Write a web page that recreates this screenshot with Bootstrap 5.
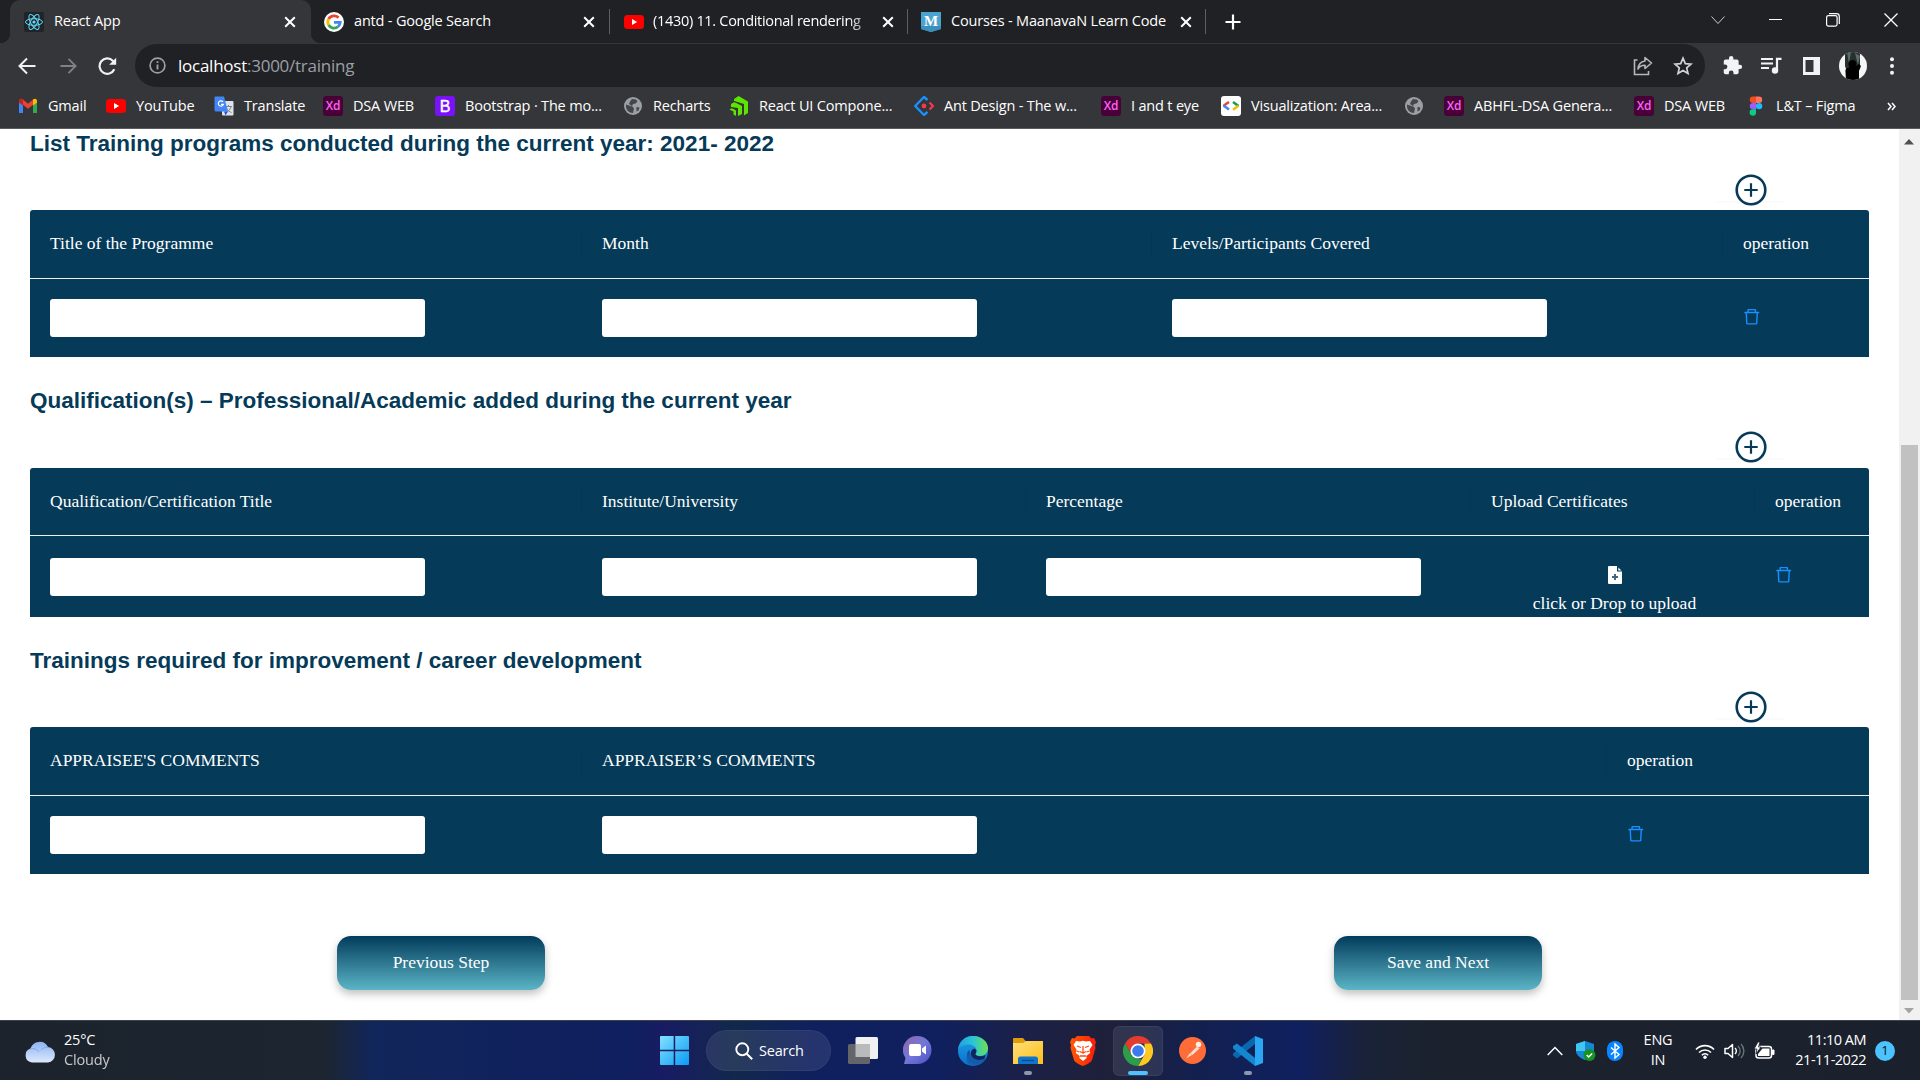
<!DOCTYPE html>
<html lang="en">
<head>
<meta charset="utf-8">
<title>React App</title>
<link href="https://cdn.jsdelivr.net/npm/bootstrap@5.3.0/dist/css/bootstrap.min.css" rel="stylesheet">
<style>
body{width:1920px;height:1080px;overflow:hidden;background:#fff;font-family:"Open Sans","Noto Sans",sans-serif}
svg{display:block;flex:none}
.ui{font-size:14.5px;letter-spacing:-.18px;color:#fff;white-space:nowrap;line-height:20px}
/* browser chrome */
.tabstrip{height:43px;background:#202124;padding-left:10px}
.tab{height:43px;padding:0 15px 0 14px}
.tab-on{width:301px;background:#35363a;border-radius:10px 10px 0 0;position:relative}
.tab-on::before,.tab-on::after{content:"";position:absolute;bottom:0;width:10px;height:10px}
.tab-on::before{left:-10px;background:radial-gradient(circle at 0 0,#202124 10px,#35363a 10.5px)}
.tab-on::after{right:-10px;background:radial-gradient(circle at 100% 0,#202124 10px,#35363a 10.5px)}
.tab-b{width:297px;padding-left:13px}
.tab-b:nth-child(2){width:298px;padding-right:14px}
.tab-b:nth-child(6){padding-right:13px}
.tab-c{width:297px;padding-right:13px}
.tabsep{width:1px;height:25px;background:#5d5f63}
.tab .ui{margin-left:10px;flex:1;padding-bottom:2px}
.tab-c .ui{margin-left:9px;letter-spacing:-.3px}
.fade-end{-webkit-mask-image:linear-gradient(90deg,#000 88%,rgba(0,0,0,.25))}
.plus-tab{margin-left:19px}
.winbtns{margin-left:auto;padding-right:22px;gap:44px}
.toolbar{height:45px;background:#35363a;padding-left:18px;padding-right:17px}
.omni{width:1570px;height:43px;border-radius:22px;background:#202124;margin-left:18px;padding:0 12px 0 14px}
.url{font-size:17px;letter-spacing:-.25px;color:#9aa0a6;line-height:24px;margin-left:12px}
.url b{font-weight:400;color:#fff}
.ic-reload{margin-left:21px}
.ic-star{margin-left:20px}
.ic-puzzle{margin-left:17px}
.ic-queue{margin-left:18px}
.ic-panel{margin-left:20px}
.ic-avatar{margin-left:18px}
.ic-menu{margin-left:22px}
.marks{height:41px;background:#35363a;border-bottom:1px solid #5a5b5f;padding:0 0 4px 18px}
.bm{width:88px;gap:10px}
.bm svg{width:20px;height:20px}
.bm:nth-child(2){width:108px}.bm:nth-child(3){width:109px}.bm:nth-child(4){width:112px}.bm:nth-child(5){width:188px}
.bm:nth-child(6){width:106px}.bm:nth-child(7){width:185px}.bm:nth-child(8){width:187px}.bm:nth-child(9){width:120px}
.bm:nth-child(10){width:183px}.bm:nth-child(11){width:40px}.bm:nth-child(12){width:190px}.bm:nth-child(13){width:112px}.bm:nth-child(14){width:141px}
.bm span{padding-bottom:1px}
/* page */
.view{height:891px;overflow:hidden}
.page-main{padding-left:30px;width:1899px}
.sec-head{font:700 22.5px/28px "Liberation Sans",Arial,sans-serif;color:#053a58;margin:0;height:28px;padding-top:1px}
.sec + .sec{margin-top:29px}
.sec:first-child .sec-head{height:27px;line-height:27px}
.add-row{height:54px;padding:5px 115px 0 0}
.sec + .sec .add-row{height:53px;padding-top:4px}
.sec:nth-child(2) .add-row{height:54px}
.add-btn{width:69px;height:40px;border:0;background:transparent;box-shadow:0 2px 0 rgba(0,0,0,.016);padding:13px 0 0 19.5px}
.grid-t{--bs-table-bg:#053a58;--bs-table-color:#fff;table-layout:fixed;width:1839px;color:#fff;font:17.5px/27px "Liberation Serif","Times New Roman",serif;border-radius:3px 3px 0 0;overflow:hidden;border-collapse:separate;border-spacing:0}
.grid-t th{font-weight:400;height:69px;padding:0 20px 2px;border-bottom:1px solid #f0f0f0;position:relative;vertical-align:middle}
.grid-t th:not(:last-child)::after{content:"";position:absolute;right:0;top:20px;width:1px;height:28px;background:rgba(0,0,0,.05)}
.grid-t td{height:78px;padding:0 20px;border:0;vertical-align:middle}
.t-qual th{height:68px;padding-bottom:0}
.t-qual td{height:81px}
.t-qual .field{height:37px}
.grid-t .field{width:375px;height:38px;border:0;border-radius:3px;background:#fff;padding:0 14px;display:block;box-shadow:none}
.drop{padding:30px 0 0 3px;height:81px;line-height:24px}
.drop svg{margin-bottom:7px}
.trash{margin-top:-3px}
.steps{padding:62px 0 0 307px;gap:789px}
.step-btn{width:208px;height:54px;border:0;border-radius:14px;background:linear-gradient(#023b5b,#5bb5c6);color:#fff;font:17.5px/27px "Liberation Serif","Times New Roman",serif;box-shadow:0 4px 9px rgba(0,0,0,.25);padding:0 0 2px}
.scroll{width:21px;background:#f1f1f1;padding:9px 4px 0 2px}
.thumb{width:17px;height:555px;background:#c1c1c1;margin-top:300px}
/* taskbar */
.task{height:60px;border-top:1px solid #3b434d;background:linear-gradient(90deg,#1c232d 0,#1c2530 325px,#11265a 372px,#10225c 500px,#101f60 630px,#181c62 665px,#12284c 735px,#10205f 810px,#10205f 940px,#1b2045 1030px,#1f203a 1110px,#122050 1200px,#10205f 1300px,#1a2238 1365px,#1b222e 1430px,#1b212c 100%)}
.weather{padding-left:24px;width:660px;gap:9px}
.weather .ui{line-height:19.5px;padding-bottom:2px}
.search{width:125px;height:41px;border-radius:21px;background:rgba(255,255,255,.09);border:1px solid rgba(255,255,255,.05);margin-left:17px;margin-right:17px;gap:6px;padding-left:28px}
.app{width:55px;height:50px;position:relative}
.app-view{width:30px}
.app-chat{width:51px;margin-left:14px;margin-right:2px}
.app-on{width:50px;margin:0 2px 0 3px;border-radius:6px;background:rgba(255,255,255,.09);border:1px solid rgba(255,255,255,.06)}
.app i{position:absolute;bottom:1px;width:8px;height:4px;border-radius:2px;background:#9095ae}
.app-on i{width:20px;background:#4cc2ff;bottom:0}
.tray{margin-left:auto;padding-right:25px}
.tray .ui{padding-bottom:1px}
.ic-shield{margin-left:13px}
.ic-bt{margin-left:11px}
.ic-tray{margin-left:9px}
.lang{width:40px;margin:0 17px 0 15px;line-height:20px;text-align:center}
.tray .clock{width:91px;text-align:right;line-height:20px;letter-spacing:-.5px}
.note-dot{width:20px;height:20px;border-radius:50%;background:#4cc2ff;color:#111;font-size:13px;margin-left:9px}
</style>
<script src="https://cdn.jsdelivr.net/npm/bootstrap@5.3.0/dist/js/bootstrap.bundle.min.js"></script>
</head>
<body>
<svg width="0" height="0" class="position-absolute">
  <defs>
    <symbol id="x" viewBox="0 0 12 12"><path d="M1.200 1.200l9.600 9.600M10.800 1.200L1.200 10.800" stroke="#fff" stroke-width="2" fill="none"/></symbol>
    <symbol id="yt" viewBox="0 0 20 20"><rect y="3" width="20" height="14" rx="3.500" fill="#f00"/><path d="M8 7l5.200 3L8 13z" fill="#fff"/></symbol>
    <symbol id="globe" viewBox="0 0 20 20"><circle cx="10" cy="10" r="9" fill="#9aa0a6"/><path d="M3 8.500l4.500 1.500 2 .5 1.500 2-1 4.500c-4 0-7-3-7-7zM9 3l4 .5 1.500 2-2 2-2.500.5-1 2-3-2 1-2.500zM13.500 11l3 .500-1 3-2 1z" fill="#45464b"/></symbol>
    <symbol id="xd" viewBox="0 0 20 20"><rect width="20" height="20" rx="3.500" fill="#470137"/><text x="10" y="14.200" text-anchor="middle" font-family="Open Sans" font-weight="600" font-size="12" fill="#ff61f6" textLength="14.500" lengthAdjust="spacingAndGlyphs">Xd</text></symbol>
    <symbol id="bin" viewBox="64 64 896 896"><path fill="#1890ff" d="M360 184h-8c4.400 0 8-3.600 8-8v8h304v-8c0 4.400 3.600 8 8 8h-8v72h72v-80c0-35.300-28.700-64-64-64H352c-35.300 0-64 28.700-64 64v80h72v-72zm504 72H160c-17.700 0-32 14.300-32 32v32c0 4.400 3.600 8 8 8h60.400l24.700 523c1.600 34.100 29.800 61 63.900 61h454c34.200 0 62.300-26.800 63.900-61l24.700-523H888c4.400 0 8-3.600 8-8v-32c0-17.700-14.300-32-32-32zM731.300 840H292.700l-24.200-512h487l-24.200 512z"/></symbol>
    <symbol id="add" viewBox="0 0 32 32"><circle cx="16" cy="16" r="14.300" fill="#fff" stroke="#053a58" stroke-width="2.600"/><path d="M16 9.300v13.400M9.300 16h13.400" stroke="#053a58" stroke-width="2.200"/></symbol>
    <linearGradient id="cloudg" x1="0" y1="0" x2="0" y2="1"><stop offset="0" stop-color="#8db4f3"/><stop offset="1" stop-color="#dce8fb"/></linearGradient>
    <linearGradient id="wing" x1="0" y1="0" x2="1" y2="1"><stop offset="0" stop-color="#82e1ff"/><stop offset="1" stop-color="#0a9bf5"/></linearGradient>
    <linearGradient id="chatg" x1="0" y1="0" x2="1" y2="1"><stop offset="0" stop-color="#8f66a8"/><stop offset=".5" stop-color="#7377d8"/><stop offset="1" stop-color="#4a4fc4"/></linearGradient>
    <linearGradient id="edgeg" x1="0" y1="0" x2="1" y2="0"><stop offset="0" stop-color="#1e9fe0"/><stop offset=".5" stop-color="#2cc4d8"/><stop offset="1" stop-color="#6be34f"/></linearGradient>
    <linearGradient id="edgeb" x1="0" y1="0" x2="0" y2="1"><stop offset="0" stop-color="#1ea2e6"/><stop offset="1" stop-color="#0a6fd0"/></linearGradient>
    <linearGradient id="fold" x1="0" y1="0" x2="1" y2="1"><stop offset="0" stop-color="#ffe07a"/><stop offset="1" stop-color="#fdbd1b"/></linearGradient>
    <linearGradient id="brv" x1="0" y1="0" x2="1" y2="0"><stop offset="0" stop-color="#ff5a00"/><stop offset="1" stop-color="#fa1c0a"/></linearGradient>
  </defs>
</svg>

<header>
  <div class="tabstrip d-flex align-items-center">
    <div class="tab tab-on d-flex align-items-center">
      <svg width="20" height="20" viewBox="0 0 20 20"><rect width="20" height="20" rx="2" fill="#202327"/><g fill="none" stroke="#61dafb" stroke-width="1"><ellipse cx="10" cy="10" rx="8.500" ry="3.300"/><ellipse cx="10" cy="10" rx="8.500" ry="3.300" transform="rotate(60 10 10)"/><ellipse cx="10" cy="10" rx="8.500" ry="3.300" transform="rotate(120 10 10)"/></g><circle cx="10" cy="10" r="1.600" fill="#61dafb"/></svg>
      <span class="ui">React App</span><svg width="12" height="12"><use href="#x"/></svg>
    </div>
    <div class="tab tab-b d-flex align-items-center">
      <svg width="20" height="20" viewBox="0 0 20 20"><circle cx="10" cy="10" r="10" fill="#fff"/><g fill="none" stroke-width="2.800"><path d="M14.500 5.700A6.200 6.200 0 0 0 4.600 7" stroke="#ea4335"/><path d="M4.600 7a6.200 6.200 0 0 0 0 6" stroke="#fbbc05"/><path d="M4.600 13a6.200 6.200 0 0 0 9.400 1.700" stroke="#34a853"/><path d="M14 14.700a6.200 6.200 0 0 0 2.200-4.400H10" stroke="#4285f4"/></g></svg>
      <span class="ui">antd - Google Search</span><svg width="12" height="12"><use href="#x"/></svg>
    </div>
    <div class="tabsep"></div>
    <div class="tab tab-c d-flex align-items-center">
      <svg width="20" height="20"><use href="#yt"/></svg>
      <span class="ui fade-end me-2">(1430) 11. Conditional rendering</span><svg width="12" height="12"><use href="#x"/></svg>
    </div>
    <div class="tabsep"></div>
    <div class="tab tab-b d-flex align-items-center">
      <svg width="20" height="20" viewBox="0 0 20 20"><path d="M0 0h20v17l-10 3-10-3z" fill="#4ba3cf"/><path d="M0 17l10 3 10-3v-3H0z" fill="#3c8fbc"/><text x="10" y="14" text-anchor="middle" font-family="Liberation Serif" font-weight="700" font-size="15" fill="#fff">M</text></svg>
      <span class="ui">Courses - MaanavaN Learn Code</span><svg width="12" height="12"><use href="#x"/></svg>
    </div>
    <div class="tabsep"></div>
    <svg class="plus-tab" width="16" height="16" viewBox="0 0 16 16"><path d="M8 .5v15M.5 8h15" stroke="#fff" stroke-width="2.200"/></svg>
    <div class="winbtns d-flex align-items-center mb-1">
      <svg width="14" height="14" viewBox="0 0 14 14"><path d="M.5 3.500L7 10.500l6.500-7" stroke="#ccc" fill="none"/></svg>
      <svg width="13" height="14" viewBox="0 0 13 14"><path d="M0 6.500h13" stroke="#fff"/></svg>
      <svg width="14" height="14" viewBox="0 0 14 14"><rect x=".6" y="2.600" width="10.500" height="10.500" rx="1.800" fill="none" stroke="#fff" stroke-width="1.200"/><path d="M3 .7h7.500a2.800 2.800 0 0 1 2.800 2.800V11" fill="none" stroke="#fff" stroke-width="1.200"/></svg>
      <svg width="14" height="14" viewBox="0 0 14 14"><path d="M.5.5l13 13M13.500.5l-13 13" stroke="#fff" stroke-width="1.300"/></svg>
    </div>
  </div>
  <div class="toolbar d-flex align-items-center">
    <svg width="18" height="18" viewBox="0 0 18 18"><path d="M17.500 9H2M9 1.500L1.500 9 9 16.500" stroke="#f1f1f1" stroke-width="2" fill="none"/></svg>
    <svg class="ms-4" width="17" height="18" viewBox="0 0 18 18"><path d="M.5 9H16M9 1.500L16.500 9 9 16.500" stroke="#7f8184" stroke-width="2" fill="none"/></svg>
    <svg class="ic-reload" width="19" height="18" viewBox="0 0 19 18"><path d="M16.300 12.300A7.700 7.700 0 1 1 14.800 3.700l2 2" stroke="#f1f1f1" stroke-width="2.200" fill="none"/><path d="M18.200.8v7h-7z" fill="#f1f1f1"/></svg>
    <div class="omni d-flex align-items-center">
      <svg width="17" height="17" viewBox="0 0 17 17"><circle cx="8.500" cy="8.500" r="7.400" fill="none" stroke="#9aa0a6" stroke-width="1.700"/><path d="M8.500 7.500v5M8.500 4.200v1.900" stroke="#9aa0a6" stroke-width="1.900"/></svg>
      <span class="url"><b>localhost</b>:3000/training</span>
      <svg class="ms-auto" width="20" height="20" viewBox="0 0 20 20"><path d="M4.500 4H1.500v14.500h14V15" fill="none" stroke="#b4b8bc" stroke-width="1.600"/><path d="M12 1.500l6.500 5.500-6.500 5.500V9.300C8.500 9.300 6.500 10.500 5 13c.3-4 2.500-7.300 7-8z" fill="none" stroke="#b4b8bc" stroke-width="1.600" stroke-linejoin="round"/></svg>
      <svg class="ic-star" width="20" height="20" viewBox="0 0 20 20"><path d="M10 2.200l2.300 5.400 5.800.5-4.400 3.800 1.300 5.700-5-3-5 3 1.300-5.700L1.900 8.100l5.800-.5z" fill="none" stroke="#d0d3d6" stroke-width="1.700"/></svg>
    </div>
    <svg class="ic-puzzle" width="21" height="21" viewBox="0 0 24 24"><path fill="#f1f3f4" d="M20.500 11H19V7a2 2 0 0 0-2-2h-4V3.500a2.500 2.500 0 0 0-5 0V5H4a2 2 0 0 0-2 2v3.800h1.500a2.700 2.700 0 0 1 0 5.400H2V20a2 2 0 0 0 2 2h3.800v-1.500a2.700 2.700 0 0 1 5.400 0V22H17a2 2 0 0 0 2-2v-4h1.500a2.500 2.500 0 0 0 0-5z"/></svg>
    <svg class="ic-queue" width="21" height="20" viewBox="0 0 21 20"><path d="M0 3h12M0 7.500h12M0 12h8" stroke="#f1f3f4" stroke-width="2"/><path d="M16 14.500V2.800h4.500" stroke="#f1f3f4" stroke-width="2.200" fill="none"/><circle cx="14" cy="14.500" r="3.200" fill="#f1f3f4"/></svg>
    <svg class="ic-panel" width="19" height="18" viewBox="0 0 19 18"><path fill="#f1f3f4" fill-rule="evenodd" d="M1 0h17v18H1zM3.500 3v12h8V3z"/></svg>
    <svg class="ic-avatar" width="28" height="28" viewBox="0 0 28 28"><clipPath id="av"><circle cx="14" cy="14" r="14"/></clipPath><g clip-path="url(#av)"><rect width="28" height="28" fill="#f4f7f6"/><path d="M6 0h15v15l-3 8H9l-3-9z" fill="#26302f"/><path d="M8 0h4l-2 12zM16 1l5 3-2 9z" fill="#5d6b69"/><circle cx="13.500" cy="12" r="4" fill="#000"/><path d="M7 28l-.5-8C6 17 8 16 11 15h5l4-3 2 2-2 5v9z" fill="#000"/></g></svg>
    <svg class="ic-menu" width="6" height="18" viewBox="0 0 6 18"><g fill="#f1f3f4"><circle cx="3" cy="2.200" r="2"/><circle cx="3" cy="9" r="2"/><circle cx="3" cy="15.800" r="2"/></g></svg>
  </div>
  <nav class="marks d-flex align-items-center">
    <div class="bm d-flex align-items-center ui"><svg viewBox="0 0 20 20"><path d="M1 4.500V17h4V9z" fill="#4285f4"/><path d="M19 4.500V17h-4V9z" fill="#34a853"/><path d="M1 5c0-2.200 2.400-2.800 4-1.500l5 4.200 5-4.200v5.200l-5 4-5-4L1 6z" fill="#ea4335"/><path d="M15 3.500c1.600-1.300 4-.7 4 1.500v1.500L15 9.500z" fill="#fbbc04"/><path d="M1 5c0-1.500 1-2.200 2-2.200l2 .7v6L1 6.500z" fill="#c5221f"/></svg><span>Gmail</span></div>
    <div class="bm d-flex align-items-center ui"><svg><use href="#yt"/></svg><span>YouTube</span></div>
    <div class="bm d-flex align-items-center ui"><svg viewBox="0 0 20 20"><rect x="8" y="5" width="11.500" height="14.500" rx="1" fill="#dfe3e8"/><path d="M11 10.500h7M14.500 9v1.500M17 11c-1 3-3 4.500-5 5.500M12.500 12c1 2 3 4 5 4.500" stroke="#7e878f" fill="none"/><path d="M1 .5h9l4 15H2a1.500 1.500 0 0 1-1.500-1.500V1z" fill="#4285f4"/><path d="M9 6A2.600 2.600 0 1 0 9.400 8.300H7" stroke="#fff" stroke-width="1.200" fill="none"/><path d="M10 15.500h4l-2.500 4z" fill="#2a56c6"/></svg><span>Translate</span></div>
    <div class="bm d-flex align-items-center ui"><svg><use href="#xd"/></svg><span>DSA WEB</span></div>
    <div class="bm d-flex align-items-center ui"><svg viewBox="0 0 20 20"><rect width="20" height="20" rx="3" fill="#7a12f9"/><text x="10" y="15.500" text-anchor="middle" font-family="Liberation Sans" font-size="16" fill="#fff" stroke="#fff" stroke-width=".4">B</text></svg><span>Bootstrap · The mo...</span></div>
    <div class="bm d-flex align-items-center ui"><svg><use href="#globe"/></svg><span>Recharts</span></div>
    <div class="bm d-flex align-items-center ui"><svg viewBox="0 0 20 20"><path d="M5 3l4.500-3L19 5.500V17l-4 2.500V8L5 5z" fill="#5ce500"/><path d="M2 8l3.500-2L13 10v8l-4 2v-8L2 11z" fill="#5ce500"/><path d="M.5 13.500L3 12l4 2.500V20l-2.500-1.500v-3z" fill="#5ce500"/><path d="M5 5.500l8.800 3.300v9.500M2 11.500l5.800 2v6" fill="none" stroke="#35363a" stroke-width=".9"/></svg><span>React UI Compone...</span></div>
    <div class="bm d-flex align-items-center ui"><svg viewBox="0 0 20 20"><path d="M13.500 4L10 1 1.200 10 10 19l3.500-3.200" fill="none" stroke="#1890ff" stroke-width="2.400" stroke-linejoin="round"/><path d="M15.500 6.500L19 10l-3.500 3.500" fill="none" stroke="#f5384c" stroke-width="2.200"/><circle cx="10" cy="10" r="2.400" fill="#f5384c"/></svg><span>Ant Design - The w...</span></div>
    <div class="bm d-flex align-items-center ui"><svg><use href="#xd"/></svg><span>I and t eye</span></div>
    <div class="bm d-flex align-items-center ui"><svg viewBox="0 0 20 20"><rect width="20" height="20" rx="3" fill="#fff"/><g fill="none" stroke-width="2.500"><path d="M8 6L5 8 2.500 10" stroke="#ea4335"/><path d="M2.500 9.500L8 13.500" stroke="#4285f4"/><path d="M12 6l5.500 4" stroke="#0f9d58"/><path d="M17.500 9.700L12 13.700" stroke="#fbbc04"/></g></svg><span>Visualization: Area...</span></div>
    <div class="bm d-flex align-items-center ui"><svg><use href="#globe"/></svg></div>
    <div class="bm d-flex align-items-center ui"><svg><use href="#xd"/></svg><span>ABHFL-DSA Genera...</span></div>
    <div class="bm d-flex align-items-center ui"><svg><use href="#xd"/></svg><span>DSA WEB</span></div>
    <div class="bm d-flex align-items-center ui"><svg viewBox="0 0 20 20"><path d="M10 .5H7a3.200 3.200 0 0 0 0 6.400h3z" fill="#f24e1e"/><path d="M10 .5h3a3.200 3.200 0 0 1 0 6.400h-3z" fill="#ff7262"/><path d="M10 6.900H7a3.200 3.200 0 0 0 0 6.400h3z" fill="#a259ff"/><circle cx="13.100" cy="10.100" r="3.200" fill="#1abcfe"/><path d="M10 13.300H7a3.200 3.200 0 1 0 3 3.200z" fill="#0acf83"/></svg><span>L&amp;T – Figma</span></div>
    <svg width="9" height="9" viewBox="0 0 9 9"><path d="M1 1l3 3.500L1 8M5 1l3 3.500L5 8" fill="none" stroke="#fff" stroke-width="1.500"/></svg>
  </nav>
</header>

<div class="view d-flex">
  <main class="page-main">
    <section class="sec">
      <h5 class="sec-head">List Training programs conducted during the current year: 2021- 2022</h5>
      <div class="add-row d-flex justify-content-end"><button class="add-btn"><svg width="32" height="32"><use href="#add"/></svg></button></div>
      <table class="table mb-0 grid-t">
        <colgroup><col style="width:552px"><col style="width:570px"><col style="width:571px"><col></colgroup>
        <thead><tr><th>Title of the Programme</th><th>Month</th><th>Levels/Participants Covered</th><th>operation</th></tr></thead>
        <tbody><tr><td><input class="form-control field"></td><td><input class="form-control field"></td><td><input class="form-control field"></td><td><svg class="trash" width="17.500" height="17.500"><use href="#bin"/></svg></td></tr></tbody>
      </table>
    </section>
    <section class="sec">
      <h5 class="sec-head">Qualification(s) – Professional/Academic added during the current year</h5>
      <div class="add-row d-flex justify-content-end"><button class="add-btn"><svg width="32" height="32"><use href="#add"/></svg></button></div>
      <table class="table mb-0 grid-t t-qual">
        <colgroup><col style="width:552px"><col style="width:444px"><col style="width:445px"><col style="width:284px"><col></colgroup>
        <thead><tr><th>Qualification/Certification Title</th><th>Institute/University</th><th>Percentage</th><th>Upload Certificates</th><th>operation</th></tr></thead>
        <tbody><tr><td><input class="form-control field"></td><td><input class="form-control field"></td><td><input class="form-control field"></td>
          <td><div class="drop d-flex flex-column align-items-center"><svg width="14" height="18" viewBox="0 0 14 18"><path d="M1 0h8v5.500h5V17a1 1 0 0 1-1 1H1a1 1 0 0 1-1-1V1a1 1 0 0 1 1-1zM10.300 1.500L13.500 4.500h-3.200z" fill="#fff"/><path d="M7 8v6M4 11h6" stroke="#3b6580" stroke-width="1.900"/></svg><span>click or Drop to upload</span></div></td>
          <td><svg class="trash" width="17.500" height="17.500"><use href="#bin"/></svg></td></tr></tbody>
      </table>
    </section>
    <section class="sec">
      <h5 class="sec-head">Trainings required for improvement / career development</h5>
      <div class="add-row d-flex justify-content-end"><button class="add-btn"><svg width="32" height="32"><use href="#add"/></svg></button></div>
      <table class="table mb-0 grid-t">
        <colgroup><col style="width:552px"><col style="width:1025px"><col></colgroup>
        <thead><tr><th>APPRAISEE'S COMMENTS</th><th>APPRAISER’S COMMENTS</th><th>operation</th></tr></thead>
        <tbody><tr><td><input class="form-control field"></td><td><input class="form-control field"></td><td><svg class="trash" width="17.500" height="17.500"><use href="#bin"/></svg></td></tr></tbody>
      </table>
    </section>
    <div class="steps d-flex">
      <button class="step-btn">Previous Step</button>
      <button class="step-btn">Save and Next</button>
    </div>
  </main>
  <aside class="scroll d-flex flex-column">
    <svg width="15" height="7" viewBox="0 0 15 7"><path d="M3 6.500L8 1l5 5.500z" fill="#505050"/></svg>
    <div class="thumb"></div>
    <svg class="mt-2" width="15" height="6" viewBox="0 0 15 6"><path d="M3 0L8 5.500 13 0z" fill="#a3a3a3"/></svg>
  </aside>
</div>

<footer class="task d-flex align-items-center">
  <div class="weather d-flex align-items-center">
    <svg width="31" height="24" viewBox="0 0 31 24"><path d="M8 23.500a7.200 7.200 0 0 1-1.500-14A9.500 9.500 0 0 1 24 8a7.800 7.800 0 0 1 0 15.500z" fill="url(#cloudg)"/><path d="M6 10c4-1 7 0 9 3M17 11c2-2 5-3.500 8-2.500" stroke="#7ea6ec" fill="none"/></svg>
    <div class="ui">25°C<br><span class="opacity-75">Cloudy</span></div>
  </div>
  <svg width="29" height="29" viewBox="0 0 29 29"><path d="M1 0h12.700v13.700H0V1a1 1 0 0 1 1-1zM15.200 0H28a1 1 0 0 1 1 1v12.700H15.200zM0 15.200h13.700V29H1a1 1 0 0 1-1-1zM15.200 15.200H29V28a1 1 0 0 1-1 1H15.200z" fill="url(#wing)"/></svg>
  <div class="search d-flex align-items-center">
    <svg width="18" height="18" viewBox="0 0 18 18"><circle cx="7.300" cy="7.300" r="6" fill="none" stroke="#fff" stroke-width="1.900"/><path d="M11.700 11.700l5.500 5.500" stroke="#fff" stroke-width="2"/></svg>
    <span class="ui">Search</span>
  </div>
  <div class="d-flex">
    <div class="app app-view"><svg class="mt-2" width="30" height="33" viewBox="0 0 30 33"><rect x="7.500" y="3" width="22.500" height="22" rx="1.500" fill="#f1f1f1"/><rect y="10" width="22" height="20" rx="1.500" fill="#646568"/><path d="M7.500 10H22v13H7.500z" fill="#b9babb"/></svg></div>
    <div class="app app-chat d-flex align-items-center justify-content-center"><svg width="29" height="29" viewBox="0 0 29 29"><path d="M14.500 0a14 14 0 1 1 0 28H1l1.500-6A14 14 0 0 1 14.500 0z" fill="url(#chatg)"/><rect x="6" y="8" width="12" height="12" rx="2" fill="#fff"/><path d="M19 12.500l4-3v9l-4-3z" fill="#fff"/></svg></div>
    <div class="app d-flex align-items-center justify-content-center"><svg width="30" height="30" viewBox="0 0 30 30"><circle cx="15" cy="15" r="15" fill="url(#edgeb)"/><path d="M0 14C1 5 7 0 15 0c9 0 15 6 15 12 0 5-4 8-8 8-3 0-5-1-5-2 0-1 1.500-1.500 1.500-4 0-3-3.500-5.500-8-5.500C5 8.500 1 11 0 14z" fill="url(#edgeg)"/><path d="M11 14c-3 3-3 10 2 13 5 3 10 1 14-4-6 3-12 1-14-3-1.200-2.500-.8-4.500-2-6z" fill="#124f9c"/><path d="M16.500 12.500c2 1 2.500 3 1.500 4.500-1 1-.5 2 1 2.700 3 1 6 .7 8.500-.7l-1 4c-5 2-11 1-13-3-1.300-3-.5-6.500 3-7.500z" fill="#10245e"/><path d="M12 17c0 6 7 9 15 5.500C22 30 15 31 11 28c-4-3-3-9 1-11z" fill="#155fae" opacity=".8"/></svg></div>
    <div class="app d-flex align-items-center justify-content-center"><svg width="30" height="28" viewBox="0 0 30 28"><path d="M0 2a1 1 0 0 1 1-1h9l3 3.500L10 8H0z" fill="#dc9c0c"/><path d="M0 6h10l3-2h17v23H0z" fill="url(#fold)"/><path d="M5 27v-5a2.500 2.500 0 0 1 2.500-2.500h15A2.500 2.500 0 0 1 25 22v5z" fill="#0f74cc"/><path d="M9 23.500h12" stroke="#064c91" stroke-width="1.300"/></svg><i></i></div>
    <div class="app d-flex align-items-center justify-content-center"><svg width="26" height="30" viewBox="0 0 26 30"><path d="M7 0h12l2.500 2.500 2.500-.5 2 4-1 3 .5 3-3.500 12c-.5 2-6 5-9 6-3-1-8.500-4-9-6L.5 12 1 9 0 6l2-4 2.500.5z" fill="url(#brv)"/><path d="M6 5l4 .5 3-.7 3 .7 4-.5 2.500 4-3 4.500.7 3.500-4 3 .5 2-3.700 3-3.700-3 .5-2-4-3 .7-3.500L3.500 9z" fill="#fff"/><path d="M7 10l4 1.500M19 10l-4 1.500M13 10v7l-3-1.500M13 17l3-1.500M10 20h6M6.500 15l3 1M19.500 15l-3 1" stroke="#fb4a16" stroke-width="1.300" fill="none"/></svg></div>
    <div class="app app-on d-flex align-items-center justify-content-center"><svg width="30" height="30" viewBox="0 0 30 30"><path d="M2 7.500A15 15 0 0 1 28 7.500H15l-6.500 11.300z" fill="#e33b2e"/><path d="M28 7.500A15 15 0 0 1 15 30l6.500-11.200L21.500 7.500z" fill="#fdc921"/><path d="M2 7.500l6.500 11.300c2 3.500 7 5 10.500 4.200L15 30A15 15 0 0 1 2 7.500z" fill="#2b9e49"/><circle cx="15" cy="15" r="7.500" fill="#fff"/><circle cx="15" cy="15" r="5.800" fill="#3a7cf0"/></svg><i></i></div>
    <div class="app d-flex align-items-center justify-content-center"><svg width="27" height="27" viewBox="0 0 27 27"><circle cx="13.500" cy="13.500" r="13.500" fill="#ff6c37"/><circle cx="19.500" cy="7.500" r="2.700" fill="#ffece5"/><path d="M18 9.500l2.500 2-7 6.500-2-2zM11 16l2 2-6 3.500z" fill="#ffddd0"/></svg></div>
    <div class="app d-flex align-items-center justify-content-center"><svg width="30" height="30" viewBox="0 0 30 30"><path d="M22 0v8L4 22.500 0 19.500v-2z" fill="#0a69ae"/><path d="M22 30v-8L4 7.500 0 10v2.500z" fill="#1485cf"/><path d="M22 0l8 3v24l-8 3z" fill="#29a7f2"/></svg><i></i></div>
  </div>
  <div class="tray d-flex align-items-center">
    <svg width="16" height="10" viewBox="0 0 16 10"><path d="M.7 9L8 1.500 15.300 9" fill="none" stroke="#fff" stroke-width="1.500"/></svg>
    <svg class="ic-shield" width="20" height="20" viewBox="0 0 20 20"><path d="M9 0l9 3v7c0 4-4 7-9 9-5-2-9-5-9-9V3z" fill="#1687d4"/><path d="M9 0v10H0V3z" fill="#41c5f2"/><circle cx="13.500" cy="14" r="6" fill="#149323"/><path d="M10.700 14l2 2 3.500-3.500" stroke="#fff" stroke-width="1.500" fill="none"/></svg>
    <svg class="ic-bt" width="16" height="20" viewBox="0 0 16 20"><rect width="16" height="20" rx="8" fill="#0a84ff"/><path d="M4 6.500l8 7-4 3.500V3l4 3.500-8 7" stroke="#fff" stroke-width="1.400" fill="none"/></svg>
    <div class="lang ui">ENG<br>IN</div>
    <svg width="20" height="16" viewBox="0 0 20 16"><g fill="none" stroke="#fff" stroke-width="1.600"><path d="M1 6.500a12.500 12.500 0 0 1 18 0M4 9.500a8.500 8.500 0 0 1 12 0M6.800 12.200a4.600 4.600 0 0 1 6.400 0"/></g><circle cx="10" cy="14.200" r="1.700" fill="#fff"/></svg>
    <svg class="ic-tray" width="21" height="16" viewBox="0 0 21 16"><path d="M1 5.500h3L8.500 1.500v13L4 10.500H1z" fill="none" stroke="#fff" stroke-width="1.500" stroke-linejoin="round"/><path d="M11 5a4 4 0 0 1 0 6" fill="none" stroke="#fff" stroke-width="1.400"/><path d="M14 3a7 7 0 0 1 0 10M17 1a10 10 0 0 1 0 14" fill="none" stroke="#6d737b" stroke-width="1.400"/></svg>
    <svg class="ic-tray" width="21" height="17" viewBox="0 0 21 17"><rect x="2" y="4.500" width="15.500" height="11.500" rx="2.500" fill="none" stroke="#fff" stroke-width="1.500"/><path d="M8.500 6.500h7v7.500H4v-2z" fill="#fff"/><path d="M18.500 8v4.500h1.500V8z" fill="#fff" stroke="#fff"/><path d="M4 0L0 7h3L2 12l5-7H4.500L6 0z" fill="#fff" stroke="#1b212c" stroke-width=".8"/></svg>
    <div class="clock ui">11:10 AM<br>21-11-2022</div>
    <div class="note-dot d-flex align-items-center justify-content-center">1</div>
  </div>
</footer>
</body>
</html>
